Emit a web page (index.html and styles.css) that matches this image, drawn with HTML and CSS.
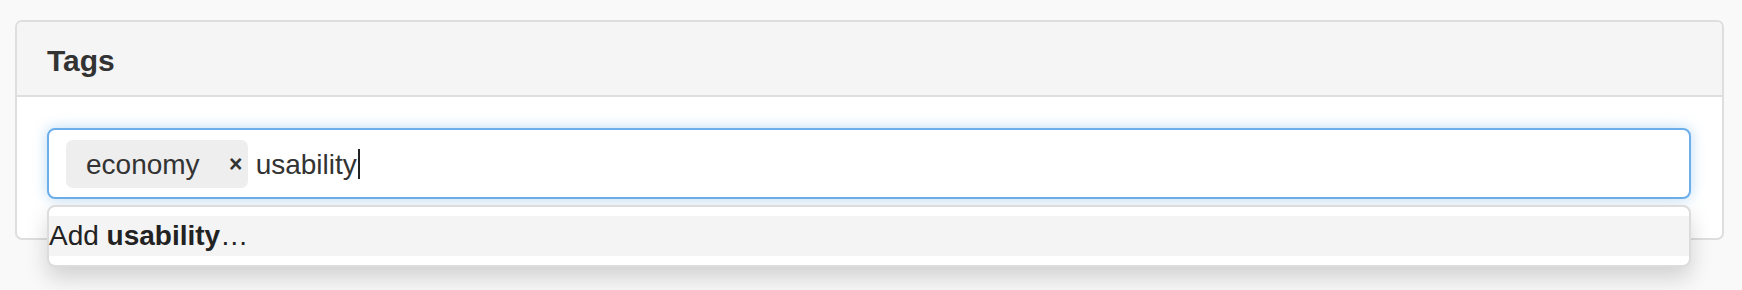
FILE: index.html
```html
<!DOCTYPE html>
<html lang="en">
<head>
<meta charset="utf-8">
<title>Tags</title>
<link rel="stylesheet" href="styles.css">
</head>
<body>
<div class="page">
  <section class="panel">
    <header class="panel-head">
      <h3 class="panel-title">Tags</h3>
    </header>
    <div class="panel-body">
      <div class="tag-field">
        <div class="tag-input">
          <span class="chip"><span class="chip-label">economy</span><span class="chip-remove">×</span></span>
          <span class="typed">usability</span><span class="caret"></span>
        </div>
        <ul class="suggestions">
          <li class="suggestion is-active">Add <b>usability</b>…</li>
        </ul>
      </div>
    </div>
  </section>
</div>
</body>
</html>
```
FILE: styles.css
```css
html, body {
  margin: 0;
  padding: 0;
  background: #f9f9f9;
}
body {
  font-family: "Liberation Sans", Arial, sans-serif;
  color: #333;
}
.page {
  min-height: 290px;
  box-sizing: border-box;
  padding: 20px 18px 0 15px;
}
.panel {
  background: #fff;
  border: 2px solid #dedede;
  border-radius: 7px;
}
.panel-head {
  background: #f5f5f5;
  border-bottom: 2px solid #dedede;
  border-radius: 5px 5px 0 0;
  padding: 22px 30px 17px;
}
.panel-title {
  margin: 0;
  font-size: 30px;
  line-height: 34px;
  font-weight: bold;
  color: #333;
}
.panel-body {
  padding: 31px 31px 39px 30px;
}
.tag-field {
  position: relative;
}
.tag-input {
  display: flex;
  align-items: center;
  height: 71px;
  box-sizing: border-box;
  padding: 0 17px;
  border: 2px solid #6caeea;
  border-radius: 8px;
  background: #fff;
  box-shadow: 0 0 14px rgba(102, 175, 233, 0.45);
  font-size: 28px;
}
.chip {
  display: flex;
  align-items: center;
  height: 48px;
  box-sizing: border-box;
  padding-left: 20px;
  background: #eeeeee;
  border-radius: 7px;
}
.chip-label {
  line-height: 34px;
  padding-top: 2px;
}
.chip-remove {
  width: 24px;
  margin-left: 24px;
  text-align: center;
  font-size: 23px;
  font-weight: bold;
  line-height: 24px;
  color: #333;
}
.typed {
  margin-left: 8px;
  line-height: 34px;
  padding-top: 2px;
}
.caret {
  width: 2px;
  height: 30px;
  margin-left: 1px;
  background: #222;
}
.suggestions {
  position: absolute;
  left: 0;
  right: 0;
  top: 77px;
  margin: 0;
  padding: 9px 0;
  list-style: none;
  background: #fff;
  border: 2px solid #dcdcdc;
  border-radius: 8px;
  box-shadow: 0 11px 22px rgba(0, 0, 0, 0.16);
}
.suggestion {
  font-size: 28px;
  line-height: 40px;
  padding: 0;
  color: #222;
}
.suggestion.is-active {
  background: #f4f4f4;
}
.suggestion b {
  font-weight: bold;
}
```
